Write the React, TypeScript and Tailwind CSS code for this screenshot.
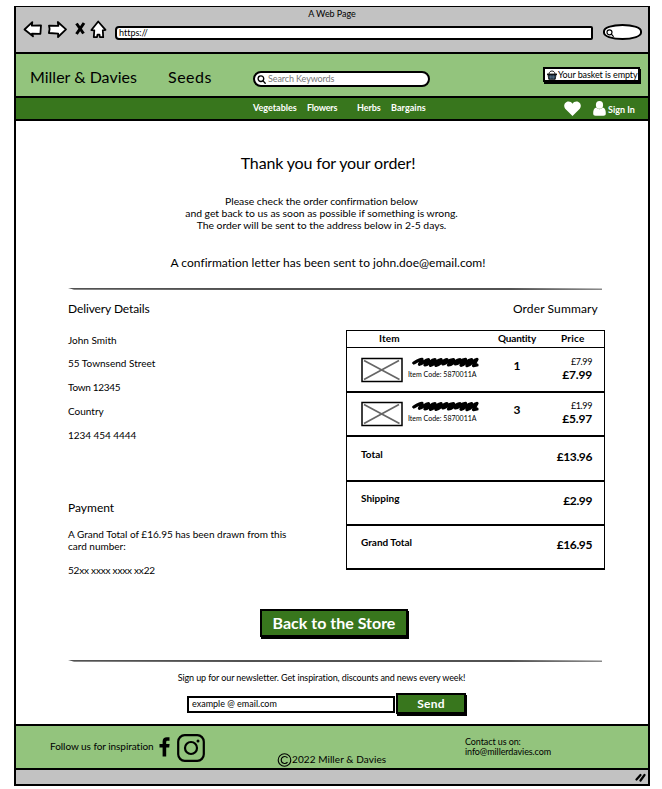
import React from "react";

function BackArrow() {
  return (
    <svg className="mt-[13px] ml-[7px] h-[19px] w-[21px] shrink-0" viewBox="0 0 21 19" fill="white" stroke="black" strokeWidth="1.8" strokeLinejoin="round">
      <path d="M1.500 9.500 9.300 2.200 8.800 5.700 18 5.400 17.400 13.800 9 13.600 10 16.300Z" />
    </svg>
  );
}

function ForwardArrow() {
  return (
    <svg className="mt-[13px] ml-[3px] h-[19px] w-[21px] shrink-0" viewBox="0 0 21 19" fill="white" stroke="black" strokeWidth="1.8" strokeLinejoin="round">
      <path d="M19 9.300 10.800 2 11.400 5.800 2 5.600 2.600 9 1.900 13 11.200 13.600 11 17Z" />
    </svg>
  );
}

function HomeIcon() {
  return (
    <svg className="mt-[13px] ml-[4px] h-[19px] w-[17px] shrink-0" viewBox="0 0 17 19" fill="white" stroke="black" strokeWidth="1.8" strokeLinejoin="round">
      <path d="M8.200 1.500 15.500 9.800 12.800 10.300 13.200 17.200 9.800 17 9.500 14.600 7.500 14.600 7 17.200 3.800 17 4.300 10.300 1.400 10Z" />
    </svg>
  );
}

function Lens({ className }: { className: string }) {
  return (
    <svg className={className} viewBox="0 0 8 8" fill="none" stroke="black" strokeWidth="1.200" strokeLinecap="round">
      <circle cx="3.500" cy="3.300" r="2.500" />
      <path d="M5.400 5.200 7.300 7.300" />
    </svg>
  );
}

function BasketIcon() {
  return (
    <svg className="h-[10px] w-[10px] shrink-0" viewBox="0 0 10 10" fill="none" stroke="#111" strokeWidth="0.900">
      <path d="M2 4C2.200 0 7.800 0 8 4" />
      <path d="M0 4.300H10" strokeWidth="1.400" />
      <path d="M1 4.800 1.800 9.300H8.200L9 4.800Z" fill="#16324a" />
      <path d="M3.400 5.300V8.800M5 5.300V8.800M6.600 5.300V8.800M1.600 7H8.500" stroke="#8fa0ad" strokeWidth="0.400" />
    </svg>
  );
}

function Scribble() {
  return (
    <svg className="h-[11px] w-[67px]" viewBox="0 0 67 11" fill="none" stroke="black" strokeLinecap="round" strokeLinejoin="round">
      <path strokeWidth="3.200" d="M1.800 6C5 4 7 2.600 10 2.400L7.500 7.300C11 6.500 13 2.600 16.500 2.500L13 8C17 7.600 19 2.500 23 2.700L18.500 8.400C22 8 25 3 29 2.500L24 8.500C28 7.800 31 2.700 35 2.500L31 7C34 6.500 37 2.300 41.500 2.500L36.500 8C41 7.500 44 2.500 48 2.500L43.500 7C47 6.800 49 2.700 53.500 2.400L49 8.300C53 7.800 55 2.800 59.500 2.500L55 8.600C60 7.800 61 2.500 65 2.300L61.500 8.700 65 8" />
    </svg>
  );
}

function Placeholder() {
  return (
    <svg className="ml-[14px] mt-[8px] h-[26px] w-[42px] shrink-0" viewBox="0 0 42 26" fill="none">
      <rect x="1" y="1.500" width="40" height="23" stroke="black" strokeWidth="1.500" />
      <path d="M3 3.500 38.500 22.500M38 3.500 3 22.500" stroke="#666" strokeWidth="1.700" />
    </svg>
  );
}

function Divider() {
  return (
    <svg className="ml-[52px] block h-[2px] w-[535px] shrink-0" viewBox="0 0 535 2">
      <path d="M0 .3 240 .2 430 .3 534 .7 534 1.500 400 1.700 180 1.700 6 1.500Z" fill="#181818" />
    </svg>
  );
}

function Heart() {
  return (
    <svg className="mt-[3px] h-[15px] w-[17px] shrink-0" viewBox="0 0 17 15" fill="white">
      <path d="M8.500 15 1.200 7.700C-.6 5.500.1 2 2.600.9 4.800-.1 7.300.7 8.500 2.800 9.700.7 12.200-.1 14.400.9 16.900 2 17.600 5.500 15.800 7.700Z" />
    </svg>
  );
}

function Person() {
  return (
    <svg className="mt-[3px] ml-[12px] h-[15px] w-[13px] shrink-0" viewBox="0 0 13 15" fill="white">
      <ellipse cx="6.500" cy="3.900" rx="3.600" ry="3.900" />
      <path d="M3.300 6.500C5 8.800 8 8.800 9.700 6.500 12.300 7.200 12.800 9.500 12.800 12.500 12.800 14.200 12 14.700 10.500 14.700H2.500C1 14.700.2 14.200.2 12.500.2 9.500.7 7.200 3.300 6.500Z" />
    </svg>
  );
}

function Facebook() {
  return (
    <svg className="mt-[11px] ml-[5px] h-[20px] w-[11px] shrink-0" viewBox="0 0 11 20" fill="black">
      <path d="M10.500.3V3.800H8.600C7.400 3.800 7.200 4.400 7.200 5.300V7.100H10.600L10.200 10.600H7.200V19.600H3.600V10.600H.5V7.100H3.600V4.500C3.600 1.700 5.200.2 7.900.2Z" />
    </svg>
  );
}

function Instagram() {
  return (
    <svg className="mt-[8px] ml-[7px] h-[28px] w-[28px] shrink-0" viewBox="0 0 28 28" fill="none" stroke="black" strokeWidth="2.200">
      <rect x="1.200" y="1.200" width="25.600" height="25.600" rx="6.500" />
      <circle cx="14" cy="14" r="6" />
      <circle cx="21" cy="7" r="1.500" fill="black" stroke="none" />
    </svg>
  );
}

const items = [
  { quantity: "1", unit: "£7.99", total: "£7.99", line: "border-t pt-px" },
  { quantity: "3", unit: "£1.99", total: "£5.97", line: "border-t-2" },
];

const totals = [
  { label: "Total", amount: "£13.96", line: "h-[45px] border-t-2 pt-[11px]" },
  { label: "Shipping", amount: "£2.99", line: "h-[44px] border-t-2 pt-[10px]" },
  { label: "Grand Total", amount: "£16.95", line: "h-[44px] border-t-2 pt-[10px]" },
];

function OrderTable() {
  return (
    <div className="flex h-[240px] w-[259px] flex-col border border-b-2 border-black">
      <div className="flex h-[16px] pl-[32px] text-[10px] leading-[15px] font-bold">
        <span className="w-[119px] tracking-[0.1px]">Item</span>
        <span className="w-[63px] tracking-[-0.2px]">Quantity</span>
        <span className="tracking-[0.2px]">Price</span>
      </div>
      {items.map((item) => (
        <div key={item.quantity} className={`flex h-[44px] border-black ${item.line}`}>
          <Placeholder />
          <div className="ml-[5px] flex w-[72px] flex-col pt-[8px]">
            <div className="ml-[4px] h-[11px]"><Scribble /></div>
            <span className="mt-[2px] text-[7px] leading-[9px] whitespace-nowrap">Item Code: 5870011A</span>
          </div>
          <span className="mt-[10px] ml-[32px] w-[10px] text-center text-[12px] leading-[14px] font-bold">{item.quantity}</span>
          <div className="flex grow flex-col pt-[7px] pr-[12px] text-right">
            <span className="text-[9px] leading-[12px] tracking-[-0.4px]">{item.unit}</span>
            <span className="text-[12px] leading-[13px] font-bold tracking-[-0.2px]">{item.total}</span>
          </div>
        </div>
      ))}
      {totals.map((row) => (
        <div key={row.label} className={`flex justify-between border-black pr-[12px] pl-[14px] ${row.line}`}>
          <span className="text-[10px] leading-[12px] font-bold">{row.label}</span>
          <span className="pt-[2px] text-[12px] leading-[14px] font-bold tracking-[-0.4px]">{row.amount}</span>
        </div>
      ))}
    </div>
  );
}

export default function App() {
  return (
    <div className="h-[789px] w-[662px] bg-white pt-[6px] pl-[14px] font-[Lato,sans-serif] text-black [font-variant-ligatures:none]">
      <div className="flex h-[780px] w-[636px] flex-col border-2 border-t border-black">
        <header className="flex h-[45px] flex-col bg-[#c2c2c2]">
          <div className="-mb-[12px] h-[12px] pt-px text-center text-[9px] leading-[12px] tracking-[-0.05px]">A Web Page</div>
          <div className="flex">
            <BackArrow />
            <ForwardArrow />
            <svg className="mt-[15px] ml-[6px] h-[13px] w-[12px] shrink-0" viewBox="0 0 12 13" fill="none" stroke="black" strokeWidth="3">
              <path d="M2.500 1.500 9.500 11.500M10 1 2.500 12" />
            </svg>
            <HomeIcon />
            <div className="mt-[19px] ml-[8px] h-[14px] w-[478px] rounded-[4px_2px_2px_4px] border-2 border-black bg-white pl-[2px] text-[9px] leading-[9px]">https://</div>
            <div className="mt-[17px] ml-[10px] h-[16px] w-[39px] rounded-[50%/45%] border-2 border-black bg-white pt-[3px] pl-px">
              <Lens className="h-[8px] w-[8px]" />
            </div>
          </div>
        </header>

        <div className="flex h-[44px] border-t-2 border-black bg-[#93c47d]">
          <span className="mt-[13px] ml-[14px] w-[138px] text-[16px] leading-[20px]">Miller &amp; Davies</span>
          <span className="mt-[13px] w-[85px] text-[16px] leading-[20px] tracking-[0.5px]">Seeds</span>
          <div className="mt-[17px] flex h-[16px] w-[177px] rounded-[9px] border-2 border-black bg-white pl-[2px]">
            <Lens className="mt-[2px] h-[9px] w-[9px]" />
            <span className="ml-[2px] text-[9px] leading-[11px] tracking-[-0.1px] text-[#777]">Search Keywords</span>
          </div>
          <div className="mt-[13px] ml-[113px] flex h-[15px] w-[97px] items-center border-2 border-black bg-white pl-[2px] text-[9px] leading-[12px] tracking-[-0.1px] whitespace-nowrap shadow-[1px_2px_0_black]">
            <BasketIcon />
            <span className="ml-px">Your basket is empty</span>
          </div>
        </div>

        <nav className="flex h-[23px] border-t-2 border-black bg-[#38761d] text-[9px] leading-[12px] font-bold text-white">
          <span className="mt-[4px] ml-[237px] w-[54px]">Vegetables</span>
          <span className="mt-[4px] w-[50px] tracking-[-0.2px]">Flowers</span>
          <span className="mt-[4px] w-[34px] tracking-[-0.1px]">Herbs</span>
          <span className="mt-[4px] w-[173px] tracking-[0.05px]">Bargains</span>
          <Heart />
          <Person />
          <span className="mt-[6px] ml-[2px]">Sign In</span>
        </nav>

        <main className="flex h-[605px] flex-col border-t-2 border-black bg-white text-[10px] leading-[12px]">
          <h1 className="mt-[32px] ml-[2px] w-[620px] text-center text-[16px] leading-[20px] tracking-[-0.15px]">Thank you for your order!</h1>
          <p className="mt-[22px] w-[611px] text-center text-[10.4px] tracking-[-0.03px]">
            Please check the order confirmation below
            <br />
            and get back to us as soon as possible if something is wrong.
            <br />
            The order will be sent to the address below in 2-5 days.
          </p>
          <p className="mt-[24px] w-[624px] text-center text-[12px] leading-[16px] tracking-[0.02px]">A confirmation letter has been sent to john.doe@email.com!</p>
          <div className="mt-[17px]"><Divider /></div>

          <div className="flex h-[319px] pl-[52px]">
            <section className="flex w-[278px] flex-col pt-[11px]">
              <h2 className="text-[12px] leading-[16px] tracking-[-0.1px]">Delivery Details</h2>
              <p className="mt-[17px]">John Smith</p>
              <p className="mt-[11px]">55 Townsend Street</p>
              <p className="mt-[12px] tracking-[-0.3px]">Town 12345</p>
              <p className="mt-[12px]">Country</p>
              <p className="mt-[12px] tracking-[-0.05px]">1234 454 4444</p>
              <h2 className="mt-[59px] text-[12px] leading-[16px]">Payment</h2>
              <p className="mt-[12px]">
                A Grand Total of £16.95 has been drawn from this
                <br />
                card number:
              </p>
              <p className="mt-[12px] tracking-[-0.2px]">52xx xxxx xxxx xx22</p>
            </section>
            <section className="flex w-[259px] flex-col pt-[11px]">
              <h2 className="mb-[13px] pl-[167px] text-[12px] leading-[16px] tracking-[0.12px]">Order Summary</h2>
              <OrderTable />
            </section>
          </div>

          <button className="ml-[244px] h-[28px] w-[148px] shrink-0 border-2 border-black bg-[#38761d] text-[16px] leading-[24px] font-bold text-white shadow-[1px_2px_0_black]">Back to the Store</button>
          <div className="mt-[23px]"><Divider /></div>
          <p className="mt-[10px] w-[611px] text-center text-[9px] leading-[12px] tracking-[-0.11px]">Sign up for our newsletter. Get inspiration, discounts and news every week!</p>
          <div className="mt-[9px] flex pl-[171px]">
            <div className="mt-[3px] h-[17px] w-[208px] border-2 border-black pl-[3px] text-[9px] leading-[12px]">example @ email.com</div>
            <button className="ml-px h-[21px] w-[70px] border-2 border-black bg-[#38761d] text-[12px] leading-[16px] font-bold tracking-[0.2px] text-white shadow-[1px_2px_0_black]">Send</button>
          </div>
        </main>

        <footer className="flex h-[44px] border-t-2 border-black bg-[#93c47d]">
          <span className="mt-[14px] ml-[34px] w-[104px] text-[10px] leading-[12px] tracking-[-0.05px] whitespace-nowrap">Follow us for inspiration</span>
          <Facebook />
          <Instagram />
          <div className="mt-[27px] ml-[72px] flex h-[14px] w-[188px]">
            <svg className="h-[14px] w-[15px] shrink-0" viewBox="0 0 15 14" fill="none" stroke="black" strokeWidth="1.100">
              <circle cx="7.500" cy="7" r="6.300" />
              <path d="M10.500 4.800C8.500 2.300 4.200 3.500 4.200 7S8.500 11.700 10.500 9.200" />
            </svg>
            <span className="text-[10px] leading-[13px] tracking-[0.08px]">2022 Miller &amp; Davies</span>
          </div>
          <p className="mt-[11px] text-[9px] leading-[10px] tracking-[-0.1px]">
            Contact us on:
            <br />
            info@millerdavies.com
          </p>
        </footer>
        <div className="flex h-[16px] justify-end border-t-2 border-black bg-[#c2c2c2] pt-[3px] pr-[2px]">
          <svg className="h-[9px] w-[11px]" viewBox="0 0 11 9" fill="none" stroke="black" strokeWidth="2.200" strokeLinecap="round">
            <path d="M1.500 6.500 5.500 2M5.500 7.500 9.500 2" />
          </svg>
        </div>
      </div>
    </div>
  );
}
